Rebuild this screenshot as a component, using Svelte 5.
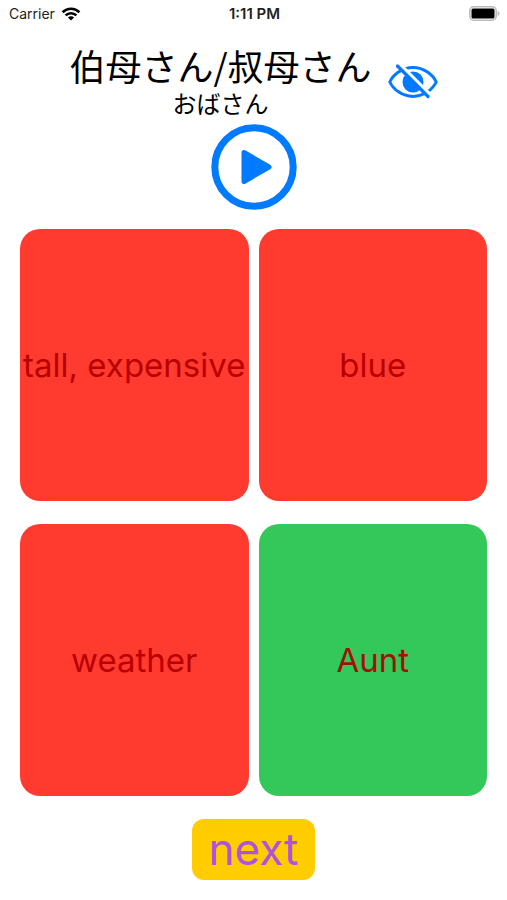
<script>
  const word = { kanji: '伯母さん/叔母さん', kana: 'おばさん', meaning: 'Aunt' };
  const choices = ['tall, expensive', 'blue', 'weather', 'Aunt'];

  let showKana = $state(true);
  let picked = $state('Aunt');
</script>

<div class="screen">
  <header class="status-bar">
    <div class="carrier">
      <span>Carrier</span>
      <svg width="20" height="14" viewBox="0 0 20 14" aria-hidden="true">
        <g fill="none" stroke="#000" stroke-width="2.6">
          <path d="M1.6 5.2a12 12 0 0 1 16.8 0" />
          <path d="M4.6 8.4a7.7 7.7 0 0 1 10.8 0" />
        </g>
        <path d="M10 13.6 6.9 10.5a4.4 4.4 0 0 1 6.2 0z" />
      </svg>
    </div>
    <time class="clock">1:11 PM</time>
    <div class="battery">
      <svg width="31" height="15" viewBox="0 0 31 15" aria-hidden="true">
        <rect x="0.8" y="0.8" width="26.4" height="13.4" rx="4" fill="#fff" stroke="#bbb" stroke-width="1.6" />
        <rect x="2.5" y="2.5" width="23" height="10" rx="1.5" />
        <path d="M28.6 5v5c1.3-.4 2-1.4 2-2.5s-.7-2.1-2-2.5z" fill="#bbb" />
      </svg>
    </div>
  </header>

  <main>
    <section class="prompt">
      <div class="word">
        <h1>{word.kanji}</h1>
        <p class:hidden={!showKana}>{word.kana}</p>
      </div>
      <button class="icon-btn" aria-label="Toggle reading" onclick={() => (showKana = !showKana)}>
        <svg width="50" height="36" viewBox="0 0 50 36" aria-hidden="true">
          <path d="M1.8 19C5 12 14 4.4 25 4.4S45 12 48.2 19C45 26 36 33.4 25 33.4S5 26 1.8 19z" fill="none" stroke="#007aff" stroke-width="3" />
          <circle cx="25" cy="19" r="10.5" fill="#007aff" />
          <path d="M11.5 1 43.5 33" stroke="#fff" stroke-width="3.6" />
          <path d="M9.5 3 40 33.5" stroke="#007aff" stroke-width="3.2" stroke-linecap="round" />
        </svg>
      </button>
    </section>

    <button class="icon-btn play" aria-label="Play pronunciation">
      <svg width="86" height="86" viewBox="0 0 86 86" aria-hidden="true">
        <circle cx="43" cy="43" r="39.2" fill="none" stroke="#007aff" stroke-width="7" />
        <path d="M33 28.5v29L58 43z" fill="#007aff" stroke="#007aff" stroke-width="5" stroke-linejoin="round" />
      </svg>
    </button>

    <div class="cards">
      {#each choices as choice}
        <button
          class="card"
          class:correct={choice === word.meaning && picked === choice}
          onclick={() => (picked = choice)}
        >{choice}</button>
      {/each}
    </div>

    <button class="next" onclick={() => (picked = '')}>next</button>
  </main>
</div>

<style>
  :global(body) { margin: 0; background: #fff; }
  .screen {
    box-sizing: border-box;
    min-height: 100vh;
    display: flex; flex-direction: column;
    font-family: Inter, "Noto Sans CJK JP", sans-serif;
    color: #000;
  }
  button { font-family: inherit; border: 0; cursor: pointer; }

  .status-bar {
    display: grid; grid-template-columns: 1fr auto 1fr; align-items: center;
    height: 27px; padding: 0 7px 0 9px;
    font-size: 14px; color: #222;
  }
  .carrier { display: flex; align-items: center; gap: 6px; }
  .clock { font-size: 15px; font-weight: 600; }
  .battery { display: flex; justify-content: flex-end; }
  svg { display: block; }

  main {
    flex: 1;
    display: flex; flex-direction: column; align-items: center;
    padding: 16px 20px 20px;
  }
  .prompt { display: flex; align-items: center; gap: 16px; }
  .word { text-align: center; }
  h1, p { margin: 0; font-weight: 400; font-family: "Noto Sans CJK JP", sans-serif; }
  h1 { font-size: 36px; line-height: 44px; }
  p { font-size: 24px; line-height: 32px; }
  .hidden { visibility: hidden; }

  .icon-btn { padding: 0; background: none; }
  .play { margin-top: 5px; }

  .cards {
    flex: 1;
    align-self: stretch;
    display: grid; grid-template-columns: 1fr 1fr; grid-auto-rows: 1fr;
    gap: 23px 10px;
    margin: 19px 0 23px;
  }
  .card {
    min-width: 0; padding: 0;
    border-radius: 20px;
    background: #ff3b30; color: #b90000;
    font-size: 33px;
  }
  .card.correct { background: #34c759; color: #a01208; }

  .next {
    padding: 0 17px;
    border-radius: 12px;
    background: #ffcc00; color: #af52de;
    font-size: 44px; line-height: 61px;
  }
</style>
